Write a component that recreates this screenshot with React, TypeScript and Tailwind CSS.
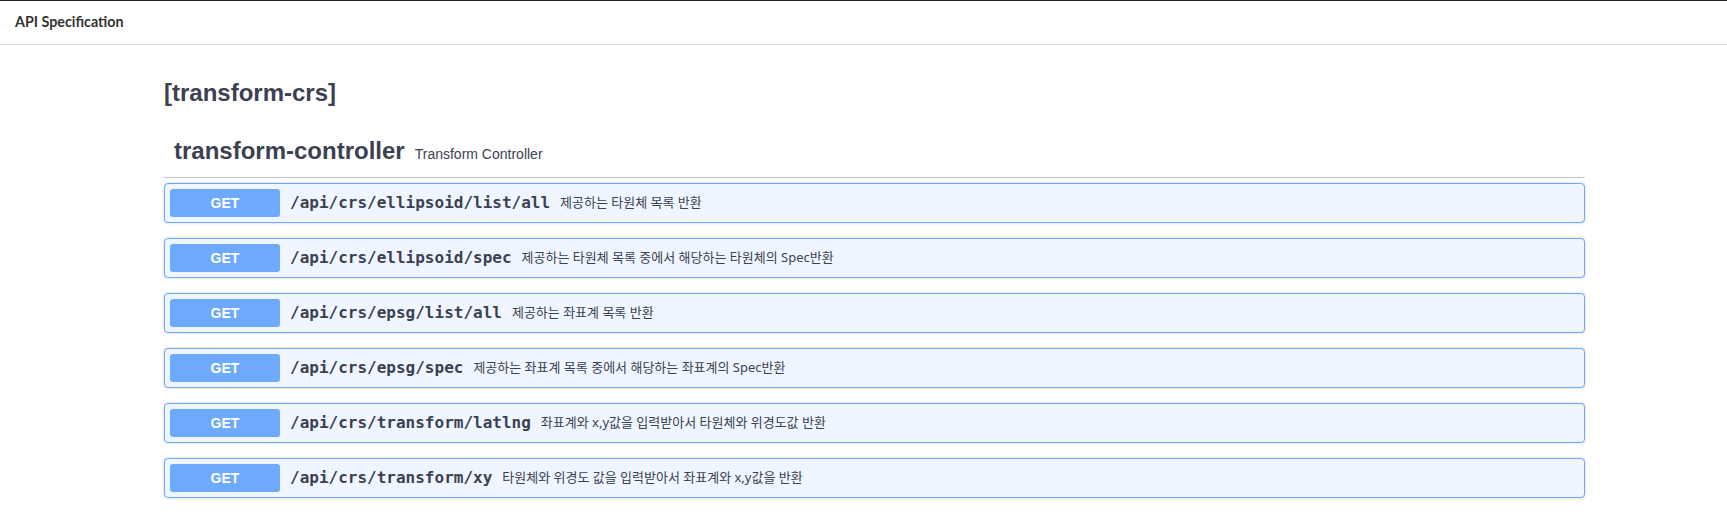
import React from 'react';

interface Endpoint {
    path: string;
    summary: string;
}

const endpoints: Endpoint[] = [
    { path: '/api/crs/ellipsoid/list/all', summary: '제공하는 타원체 목록 반환' },
    { path: '/api/crs/ellipsoid/spec', summary: '제공하는 타원체 목록 중에서 해당하는 타원체의 Spec반환' },
    { path: '/api/crs/epsg/list/all', summary: '제공하는 좌표계 목록 반환' },
    { path: '/api/crs/epsg/spec', summary: '제공하는 좌표계 목록 중에서 해당하는 좌표계의 Spec반환' },
    { path: '/api/crs/transform/latlng', summary: '좌표계와 x,y값을 입력받아서 타원체와 위경도값 반환' },
    { path: '/api/crs/transform/xy', summary: '타원체와 위경도 값을 입력받아서 좌표계와 x,y값을 반환' },
];

const OperationRow: React.FC<Endpoint> = ({ path, summary }) => (
    <div className="mb-[15px] flex h-[40px] items-center rounded-[4px] border border-[#6eaafc] bg-[#eff6ff] px-[5px] shadow-[0_0_3px_rgba(0,0,0,0.19)]">
        <span className="flex h-[28px] w-[110px] shrink-0 items-center justify-center rounded-[3px] bg-[#6eaafc] font-['Liberation_Sans',sans-serif] text-[14px] font-bold text-white">
            GET
        </span>
        <span className="pl-[10px] font-['DejaVu_Sans_Mono',monospace] text-[16px] font-bold text-[#3b4151]">
            {path}
        </span>
        <span className="pl-[10px] font-['Noto_Sans','Noto_Sans_CJK_KR',sans-serif] text-[13px] text-[#3b4151]">
            {summary}
        </span>
    </div>
);

export default function App() {
    return (
        <div className="min-h-screen w-full bg-white">
            {/* Top bar */}
            <div className="flex h-[45px] items-center border-t border-b border-t-[#222] border-b-[#dcdcdc] px-[15px] pb-[2px]">
                <span className="font-['Lato',sans-serif] text-[14.3px] font-bold text-[#333]">API Specification</span>
            </div>

            <div className="w-[1585px] pl-[164px] pt-[33px]">
                <h2 className="font-['Liberation_Sans',sans-serif] text-[24px] font-bold leading-[30px] text-[#3b4151]">
                    [transform-crs]
                </h2>

                <div className="mt-[28px] flex items-baseline gap-[10px] border-b border-[#c4c6cb] px-[10px] pb-[11px] font-['Liberation_Sans',sans-serif] text-[#3b4151]">
                    <span className="text-[24px] font-bold leading-[30px]">transform-controller</span>
                    <span className="text-[14px]">Transform Controller</span>
                </div>

                <div className="mt-[5px]">
                    {endpoints.map((e) => (
                        <OperationRow key={e.path} {...e} />
                    ))}
                </div>
            </div>
        </div>
    );
}
